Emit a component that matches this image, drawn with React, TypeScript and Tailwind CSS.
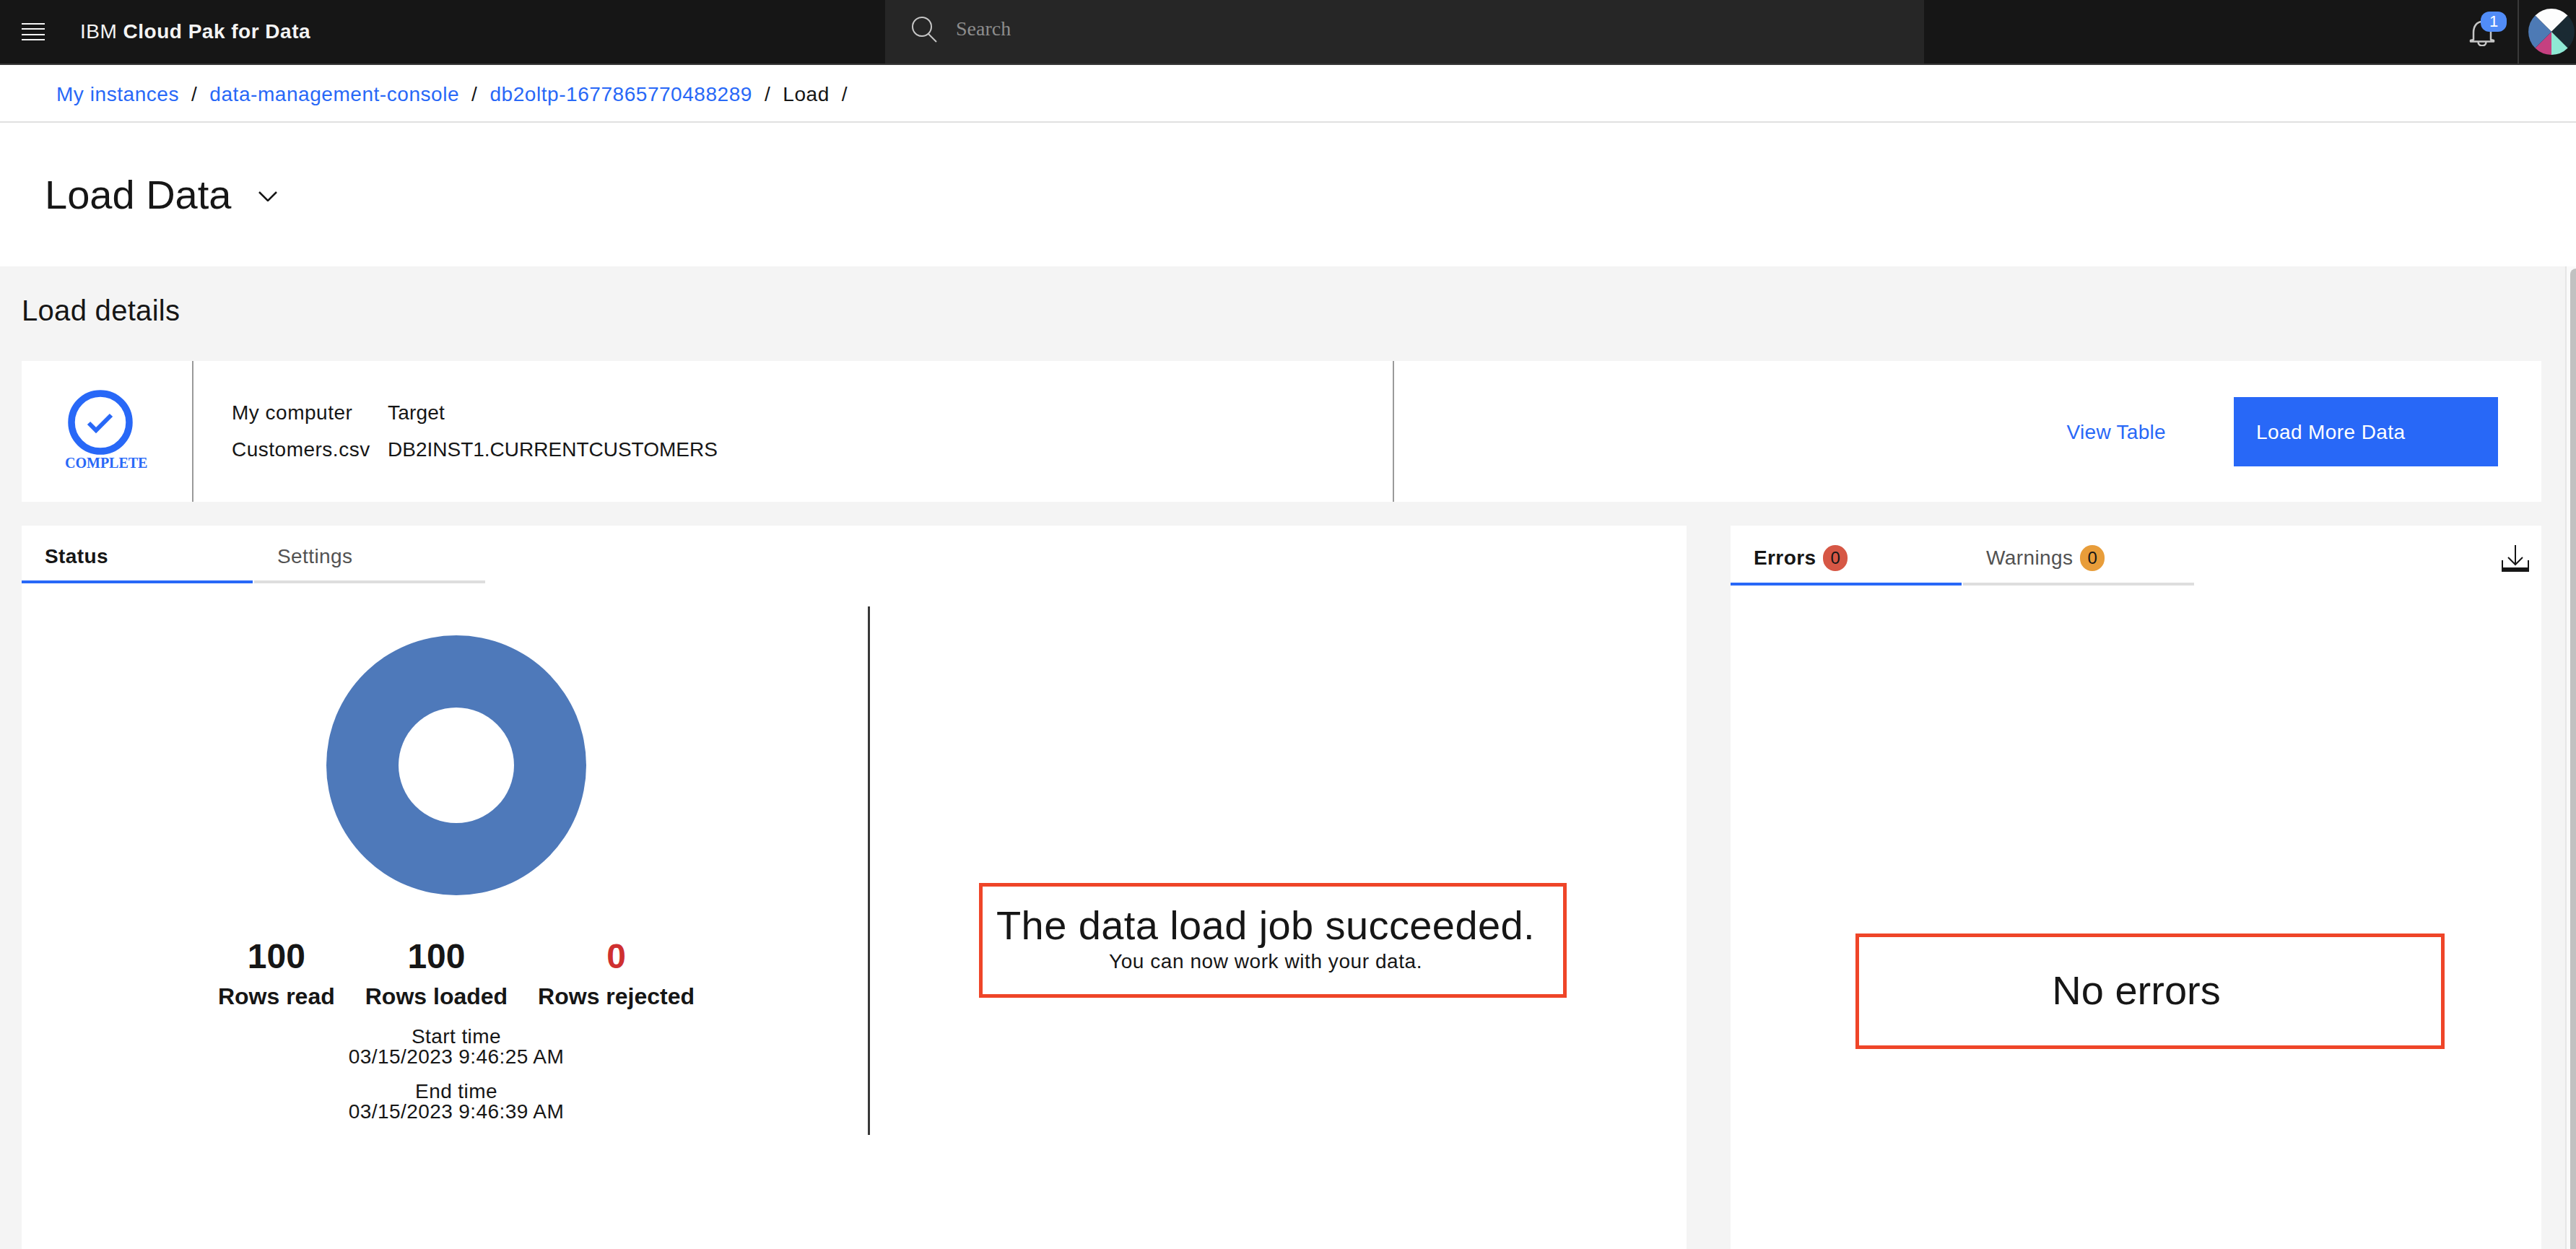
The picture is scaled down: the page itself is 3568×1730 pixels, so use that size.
const BLUE = "text-[#2868f7]";

function Hamburger() {
  return (
    <div className="flex h-[24px] w-[32px] flex-col justify-between">
      <div className="h-[2px] bg-[#f4f4f4]" />
      <div className="h-[2px] bg-[#f4f4f4]" />
      <div className="h-[2px] bg-[#f4f4f4]" />
      <div className="h-[2px] bg-[#f4f4f4]" />
    </div>
  );
}

function Avatar() {
  return (
    <svg width="64" height="64" viewBox="0 0 64 64">
      <path d="M32 32 L9.4 9.4 A32 32 0 0 1 54.6 9.4 Z" fill="#fdfdfd" />
      <path d="M32 32 L54.6 9.4 A32 32 0 0 1 54.6 54.6 Z" fill="#1a2a33" />
      <path d="M32 32 L54.6 54.6 A32 32 0 0 1 32 64 Z" fill="#8fe8d4" />
      <path d="M32 32 L32 64 A32 32 0 0 1 9.4 54.6 Z" fill="#c54080" />
      <path d="M32 32 L9.4 54.6 A32 32 0 0 1 9.4 9.4 Z" fill="#4d7ab5" />
    </svg>
  );
}

function Bell() {
  return (
    <svg width="36" height="36" viewBox="0 0 36 36" fill="none" stroke="#c6c6c6" strokeWidth="2.5">
      <path d="M6 27 V17 C6 8 11 2 18 2 C25 2 30 8 30 17 V27 L34 28 V29.5 H2 V28 Z" strokeLinejoin="round" />
      <path d="M12.5 30 C12.5 37 23.5 37 23.5 30" />
    </svg>
  );
}

function Crumb({ label, link = true }: { label: string; link?: boolean }) {
  return (
    <>
      <span className={link ? BLUE : "text-[#161616]"}>{label}</span>
      <span className="mx-[17px] text-[#161616]">/</span>
    </>
  );
}

function TabBar({ tabs, barClass }: { tabs: { label: string; badge?: string }[]; barClass: string }) {
  return (
    <div className={`flex gap-[2px] ${barClass}`}>
      {tabs.map((tab, i) => (
        <div
          key={tab.label}
          className={`flex w-[320px] items-center gap-[10px] border-b-4 pl-[32px] pt-[10px] text-[28px] leading-[28px] tracking-[0.4px] ${
            i === 0 ? "border-[#2868f7] font-bold text-[#161616]" : "border-[#dedede] text-[#525252]"
          }`}
        >
          {tab.label}
          {tab.badge && (
            <span
              className={`flex h-[36px] w-[34px] items-center justify-center rounded-full text-[24px] font-normal text-[#161616] ${tab.badge}`}
            >
              0
            </span>
          )}
        </div>
      ))}
    </div>
  );
}

function Stat({ value, label, red }: { value: string; label: string; red?: boolean }) {
  return (
    <div className="flex flex-col items-center font-bold">
      <div className={`text-[48px] leading-[48px] ${red ? "text-[#cf3030]" : "text-[#161616]"}`}>{value}</div>
      <div className="mt-[15px] text-[32px] leading-[32px] text-[#161616]">{label}</div>
    </div>
  );
}

export default function App() {
  return (
    <div className="flex h-[1730px] w-[3568px] flex-col overflow-hidden bg-white font-['Liberation_Sans',sans-serif] text-[#161616]">
      {/* top bar */}
      <header className="flex h-[90px] shrink-0 border-b-2 border-[#393939] bg-[#161616]">
        <div className="flex w-[1226px] items-center pl-[30px]">
          <Hamburger />
          <div className="ml-[49px] text-[28px] leading-[28px] tracking-[0.5px] text-[#f4f4f4]">
            IBM <span className="font-bold">Cloud Pak for Data</span>
          </div>
        </div>
        <div className="flex w-[1439px] items-center bg-[#262626] pb-[6px] pl-[36px]">
          <svg width="36" height="36" viewBox="0 0 36 36" fill="none" stroke="#c6c6c6" strokeWidth="2">
            <circle cx="15" cy="14" r="13" />
            <path d="M24 24 L35 35" />
          </svg>
          <span className="mb-[3px] ml-[26px] font-['Liberation_Serif',serif] text-[28px] leading-[28px] text-[#8d8d8d]">
            Search
          </span>
        </div>
        <div className="flex flex-1 items-center justify-end">
          <div className="relative mr-[31px] mt-[4px]">
            <Bell />
            <span className="absolute -right-[16px] -top-[12px] flex h-[28px] w-[36px] items-center justify-center rounded-[12px] bg-[#518cf7] text-[22px] leading-[22px] text-white">
              1
            </span>
          </div>
          <div className="flex h-full w-[81px] items-center border-l-2 border-[#393939] pl-[13px]">
            <Avatar />
          </div>
        </div>
      </header>

      {/* breadcrumb */}
      <nav className="flex h-[80px] shrink-0 items-center border-b-2 border-[#e0e0e0] pl-[78px] pt-[3px] text-[28px] leading-[28px] tracking-[0.55px]">
        <Crumb label="My instances" />
        <Crumb label="data-management-console" />
        <Crumb label="db2oltp-1677865770488289" />
        <Crumb label="Load" link={false} />
      </nav>

      {/* page title */}
      <div className="flex h-[199px] shrink-0 items-center pl-[62px]">
        <h1 className="text-[56px] font-normal leading-[56px]">Load Data</h1>
        <svg className="ml-[38px] mt-[4px]" width="26" height="14" viewBox="0 0 26 14" fill="none" stroke="#161616" strokeWidth="2.5">
          <path d="M1 1 L13 13 L25 1" />
        </svg>
      </div>

      <div className="flex min-h-0 flex-1">
        <main className="flex min-w-0 flex-1 flex-col bg-[#f4f4f4] pl-[30px] pr-[33px]">
          <div className="flex h-[131px] shrink-0 items-center pb-[9px] text-[40px] leading-[40px] tracking-[0.3px]">
            Load details
          </div>

          {/* summary card */}
          <section className="flex h-[195px] shrink-0 bg-white">
            <div className="flex w-[238px] flex-col border-r-2 border-[#9a9a9a] pl-[60px] pt-[40px]">
              <svg className="ml-[4px]" width="90" height="90" viewBox="0 0 90 90" fill="none" stroke="#2868f7">
                <circle cx="45" cy="45" r="40" strokeWidth="9.5" />
                <path d="M29 46 L39 56 L60 35" strokeWidth="6" />
              </svg>
              <div className="mt-[1px] font-['Liberation_Serif',serif] text-[20px] font-bold leading-[20px] text-[#2868f7]">
                COMPLETE
              </div>
            </div>
            <div className="flex w-[1663px] items-start border-r-2 border-[#9a9a9a] pl-[53px] pt-[58px]">
              <div className="grid grid-cols-[216px_auto] gap-y-[23px] text-[28px] leading-[28px]">
                <div className="tracking-[0.5px]">My computer</div>
                <div className="tracking-[0.2px]">Target</div>
                <div className="tracking-[0.5px]">Customers.csv</div>
                <div>DB2INST1.CURRENTCUSTOMERS</div>
              </div>
            </div>
            <div className="flex flex-1 items-center justify-end pr-[60px] pt-[3px] text-[28px] leading-[28px] tracking-[0.3px]">
              <span className={BLUE}>View Table</span>
              <div className="ml-[94px] -mt-[3px] flex h-[96px] w-[366px] items-center bg-[#2868f7] pl-[31px] pt-[3px] tracking-[0.4px] text-white">
                Load More Data
              </div>
            </div>
          </section>

          <div className="mt-[33px] flex min-h-0 flex-1 gap-[61px]">
            {/* status panel */}
            <section className="flex w-[2306px] flex-col bg-white">
              <TabBar barClass="h-[80px]" tabs={[{ label: "Status" }, { label: "Settings" }]} />
              <div className="mt-[32px] flex items-start">
                <div className="ml-[32px] flex w-[1140px] flex-col items-center pt-[40px]">
                  <div className="flex h-[360px] w-[360px] items-center justify-center rounded-full bg-[#4e79ba]">
                    <div className="h-[160px] w-[160px] rounded-full bg-white" />
                  </div>
                  <div className="mt-[61px] flex gap-[42px]">
                    <Stat value="100" label="Rows read" />
                    <Stat value="100" label="Rows loaded" />
                    <Stat value="0" label="Rows rejected" red />
                  </div>
                  <div className="mt-[26px] text-center text-[28px] leading-[28px] tracking-[0.42px]">
                    <div>Start time</div>
                    <div>03/15/2023 9:46:25 AM</div>
                    <div className="mt-[20px]">End time</div>
                    <div>03/15/2023 9:46:39 AM</div>
                  </div>
                </div>
                <div className="h-[732px] w-[3px] bg-[#393939]" />
                <div className="ml-[151px] mt-[383px] flex h-[159px] w-[814px] flex-col items-center border-[5px] border-[#ef4528] pr-[20px] pt-[26px]">
                  <div className="text-[56px] leading-[56px] tracking-[0.4px]">The data load job succeeded.</div>
                  <div className="mt-[8px] text-[28px] leading-[28px] tracking-[0.56px]">
                    You can now work with your data.
                  </div>
                </div>
              </div>
            </section>

            {/* errors panel */}
            <section className="flex min-w-0 flex-1 flex-col bg-white">
              <div className="flex justify-between pr-[17px]">
                <TabBar
                  barClass="h-[83px]"
                  tabs={[
                    { label: "Errors", badge: "bg-[#d65745]" },
                    { label: "Warnings", badge: "bg-[#e89d3a]" },
                  ]}
                />
                <svg className="mt-[27px]" width="38" height="37" viewBox="0 0 38 37" fill="none" stroke="#161616">
                  <path d="M19 0 V27 M9 17 L19 27 L29 17" strokeWidth="2" />
                  <path d="M1 21 V36 H37 V21" strokeWidth="2" />
                  <path d="M0 34 H38" strokeWidth="6" />
                </svg>
              </div>
              <div className="ml-[173px] mt-[482px] flex h-[160px] w-[816px] justify-center border-[5px] border-[#ef4528] pr-[38px] pt-[46px] text-[56px] leading-[56px]">
                No errors
              </div>
            </section>
          </div>
        </main>

        {/* scrollbar */}
        <aside className="w-[15px] shrink-0 border-l-2 border-[#e5e5e5] bg-[#fafafa] pl-[5px] pt-[3px]">
          <div className="h-full rounded-tl-[8px] bg-[#c1c1c1]" />
        </aside>
      </div>
    </div>
  );
}
